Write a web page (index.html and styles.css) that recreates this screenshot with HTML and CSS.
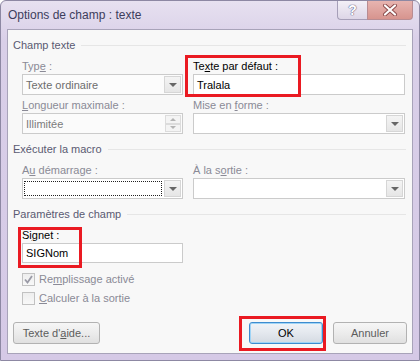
FILE: index.html
```html
<!DOCTYPE html>
<html lang="fr">
<head>
    <meta charset="UTF-8">
    <title>Options de champ : texte</title>
    <link rel="stylesheet" href="styles.css">
</head>
<body>

<div class="window">

    <div class="titlebar">
        <span class="title">Options de champ : texte</span>
        <div class="caption">
            <span class="cap-help">?</span>
            <span class="cap-close">
                <svg width="16" height="12" viewBox="0 0 16 12">
                    <path d="M3 1.5 L13 10.5 M13 1.5 L3 10.5" stroke="#8a4a4a" stroke-width="4" stroke-linecap="round"/>
                    <path d="M3 1.5 L13 10.5 M13 1.5 L3 10.5" stroke="#ffffff" stroke-width="2.2" stroke-linecap="round"/>
                </svg>
            </span>
        </div>
    </div>

    <div class="client">

        <!-- Champ texte -->
        <div class="group-head first"><span>Champ texte</span></div>
        <div class="grid">
            <div class="field">
                <div class="label off">Typ<u>e</u> :</div>
                <div class="combo disabled"><span class="value">Texte ordinaire</span><span class="drop"><i></i></span></div>
            </div>
            <div class="field">
                <div class="label">Te<u>x</u>te par défaut :</div>
                <div class="textbox">Tralala</div>
            </div>
            <div class="field row2">
                <div class="label off"><u>L</u>ongueur maximale :</div>
                <div class="textbox disabled">
                    <span class="value">Illimitée</span>
                    <span class="spin"><b><i class="up"></i></b><b><i class="down"></i></b></span>
                </div>
            </div>
            <div class="field row2">
                <div class="label off">Mise en <u>f</u>orme :</div>
                <div class="combo"><span class="value"></span><span class="drop"><i></i></span></div>
            </div>
        </div>

        <!-- Exécuter la macro -->
        <div class="group-head"><span>Exécuter la macro</span></div>
        <div class="grid">
            <div class="field">
                <div class="label off">A<u>u</u> démarrage :</div>
                <div class="combo"><span class="value focus"></span><span class="drop"><i></i></span></div>
            </div>
            <div class="field">
                <div class="label off">À la s<u>o</u>rtie :</div>
                <div class="combo"><span class="value"></span><span class="drop"><i></i></span></div>
            </div>
        </div>

        <!-- Paramètres de champ -->
        <div class="group-head"><span>Paramètres de champ</span></div>
        <div class="grid">
            <div class="field">
                <div class="label">Si<u>g</u>net :</div>
                <div class="textbox short">SIGNom</div>
            </div>
        </div>

        <div class="checks">
            <div class="check">
                <span class="box">
                    <svg width="11" height="11" viewBox="0 0 11 11">
                        <path d="M2 5.5 L4.5 8.5 L9 2" fill="none" stroke="#9a9aa6" stroke-width="1.8"/>
                    </svg>
                </span>
                <span>Re<u>m</u>plissage activé</span>
            </div>
            <div class="check">
                <span class="box"></span>
                <span><u>C</u>alculer à la sortie</span>
            </div>
        </div>

        <div class="actions">
            <button class="btn">Texte d'<u>a</u>ide...</button>
            <button class="btn default">OK</button>
            <button class="btn">Annuler</button>
        </div>

    </div>

    <!-- Encadrés rouges -->
    <div class="mark mark-default"></div>
    <div class="mark mark-signet"></div>
    <div class="mark mark-ok"></div>

</div>

</body>
</html>
```

FILE: styles.css
```css
* {
    margin: 0;
    padding: 0;
    box-sizing: border-box;
}

body {
    font-family: 'Liberation Sans', Arial, sans-serif;
    font-size: 11px;
    background-color: #ffffff;
    color: #000;
}

u {
    text-decoration: underline;
    text-underline-offset: 1px;
}

.window {
    position: relative;
    width: 420px;
    height: 361px;
    border: 1px solid #8d88a3;
    border-radius: 6px 6px 0 0;
    background: linear-gradient(#e7e1f0, #d9cfe8 40px, #d5c9e6);
}

/* Barre de titre */

.titlebar {
    height: 28px;
    display: flex;
    justify-content: space-between;
    align-items: flex-start;
}

.title {
    font-size: 12px;
    color: #3d3d5c;
    padding: 7px 0 0 7px;
    line-height: 15px;
}

.caption {
    display: flex;
    margin-right: 6px;
}

.cap-help, .cap-close {
    height: 19px;
    display: flex;
    align-items: center;
    justify-content: center;
    border: 1px solid #a69fb8;
    border-top: none;
}

.cap-help {
    width: 30px;
    border-radius: 0 0 0 4px;
    border-right: none;
    background: linear-gradient(#f3f0f7, #ddd6e7);
    font-size: 14px;
    font-weight: bold;
    color: #ffffff;
    text-shadow: 0 0 1px #6d6888, 0 0 1px #6d6888, 0 0 1px #6d6888;
}

.cap-close {
    width: 46px;
    border-radius: 0 0 4px 0;
    border-color: #b88c92;
    background: linear-gradient(#e7b4b0, #d7948e);
}

/* Zone client */

.client {
    margin: 0 6px;
    height: 325px;
    border: 1px solid #a8a3b9;
    background-color: #f8f8f8;
    padding: 0 5px;
}

.group-head {
    display: flex;
    align-items: center;
    line-height: 14px;
    color: #5a5a72;
    margin-top: 8px;
    margin-right: 1px;
}

.group-head::after {
    content: "";
    flex: 1;
    height: 1px;
    margin-left: 6px;
    background-color: #e6e6e6;
}

.grid {
    display: grid;
    grid-template-columns: 161px 212px;
    column-gap: 10px;
    row-gap: 3px;
    padding-left: 9px;
    margin-top: 7px;
}

.field .label {
    line-height: 14px;
    margin-bottom: 1px;
    white-space: nowrap;
}

.label.off {
    color: #8a8a96;
}

.combo, .textbox {
    height: 21px;
    border: 1px solid #cbcbcb;
    background-color: #ffffff;
    display: flex;
    align-items: center;
    line-height: 14px;
}

.textbox {
    padding-left: 3px;
}

.textbox.short {
    height: 20px;
}

.textbox.disabled {
    background-color: #fbfbfb;
    color: #7c7c7c;
    padding-left: 0;
}

.combo .value, .textbox .value {
    flex: 1;
    padding-left: 3px;
    align-self: stretch;
    display: flex;
    align-items: center;
}

.combo.disabled {
    background-color: #fcfcfc;
    color: #6d6d6d;
}

.combo .value.focus {
    margin: 2px 1px 2px 1px;
    border: 1px dotted #222;
}

.drop {
    width: 17px;
    align-self: stretch;
    margin: 1px;
    border: 1px solid #d6d6d6;
    background: linear-gradient(#f4f4f4, #e6e6e6);
    display: flex;
    align-items: center;
    justify-content: center;
}

.drop i {
    width: 0;
    height: 0;
    border-left: 4px solid transparent;
    border-right: 4px solid transparent;
    border-top: 4px solid #666666;
}

.spin {
    width: 16px;
    align-self: stretch;
    display: flex;
    flex-direction: column;
    margin: 1px;
}

.spin b {
    flex: 1;
    border: 1px solid #dcdcdc;
    background-color: #f4f4f4;
    display: flex;
    align-items: center;
    justify-content: center;
}

.spin i {
    width: 0;
    height: 0;
    border-left: 3px solid transparent;
    border-right: 3px solid transparent;
}

.spin i.up {
    border-bottom: 3px solid #b4b4b4;
}

.spin i.down {
    border-top: 3px solid #b4b4b4;
}

/* Cases à cocher */

.checks {
    margin-top: 8px;
    padding-left: 9px;
    display: flex;
    flex-direction: column;
    gap: 2px;
}

.check {
    display: flex;
    align-items: center;
    gap: 4px;
    line-height: 17px;
    color: #8a8a96;
}

.check .box {
    width: 13px;
    height: 13px;
    border: 1px solid #c2c2c2;
    background: linear-gradient(#eeeeee, #f8f8f8);
    display: flex;
    align-items: center;
    justify-content: center;
}

/* Boutons */

.actions {
    display: flex;
    gap: 10px;
    margin-top: 15px;
}

.btn {
    height: 22px;
    width: 74px;
    font-family: inherit;
    font-size: 11px;
    color: #5c5c5c;
    border: 1px solid #b2b2b2;
    border-radius: 3px;
    background: linear-gradient(#f6f6f6, #ececec 50%, #e0e0e0);
}

.btn:first-child {
    width: 87px;
    margin-right: auto;
}

.btn.default {
    color: #000;
    border-color: #3d8ccf;
    box-shadow: inset 0 0 0 1px #9fd4f6;
    background: linear-gradient(#f0f4f8, #e4e8ee 50%, #d4dae2);
}

/* Encadrés rouges par-dessus la capture */

.mark {
    position: absolute;
    border: 3px solid #ea1a22;
}

.mark-default {
    left: 184px;
    top: 54px;
    width: 116px;
    height: 42px;
}

.mark-signet {
    left: 17px;
    top: 226px;
    width: 64px;
    height: 41px;
}

.mark-ok {
    left: 238px;
    top: 315px;
    width: 87px;
    height: 35px;
}
```
